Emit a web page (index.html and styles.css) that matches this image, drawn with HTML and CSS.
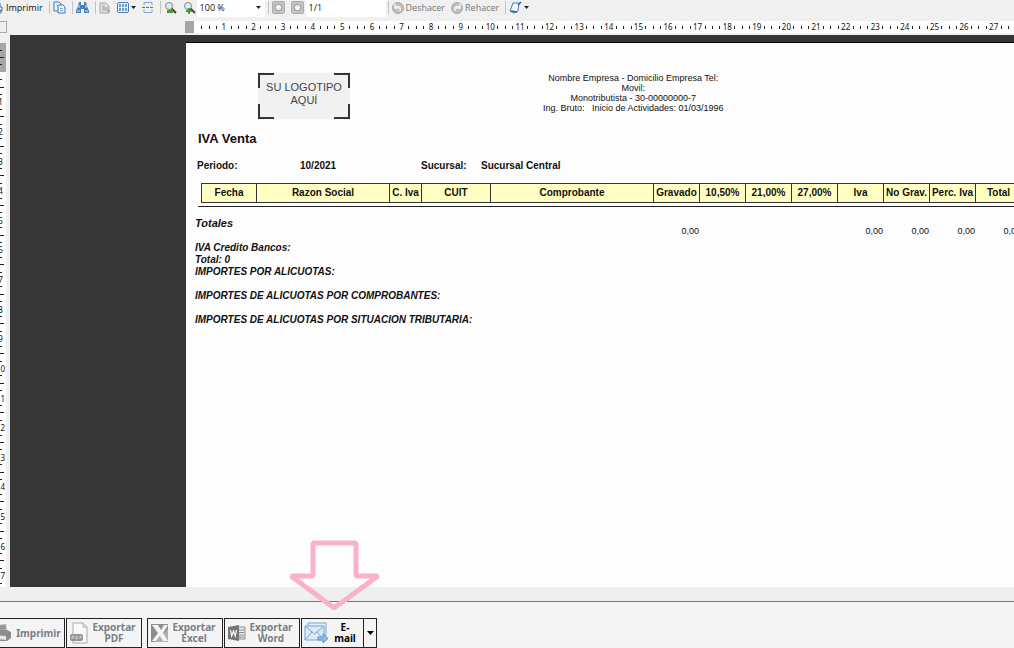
FILE: index.html
```
<!DOCTYPE html>
<html lang="es">
<head>
    <meta charset="UTF-8">
    <meta name="viewport" content="width=device-width, initial-scale=1.0">
    <title>IVA Venta</title>
    <link rel="stylesheet" href="styles.css">
</head>
<body>
    <header class="toolbar">
      <button class="tool print">
        <svg width="12" height="12" viewBox="0 0 12 12"><path d="M2 5V1h6v4M1 5h9v4H1zM3 8h6v3H3z" fill="#fff" stroke="#4d6f9c"/></svg>
        Imprimir
      </button>
      <span class="sep"></span>
      <button class="tool" aria-label="Copiar">
        <svg width="13" height="13" viewBox="0 0 13 13"><path d="M1 1h5l2 2v7H1z" fill="#eef5fc" stroke="#3f78b5"/><path d="M5 4h5l2 2v6H5z" fill="#eef5fc" stroke="#3f78b5"/><path d="M7 7.500h3M7 9.500h3M3 4h1" stroke="#7fa8d4"/></svg>
      </button>
      <span class="sep"></span>
      <button class="tool" aria-label="Buscar">
        <svg width="13" height="13" viewBox="0 0 13 13"><path d="M3 1h2v3h3V1h2l1 4 2 5v2H8V8H5v4H0v-2l2-5z" fill="#4d7fb8"/><path d="M1 10h3M9 10h3M3 4v3M10 4v3" stroke="#d5e4f3"/></svg>
      </button>
      <span class="sep"></span>
      <button class="tool" aria-label="Configurar">
        <svg width="12" height="13" viewBox="0 0 12 13"><path d="M1 2h6l3 3v7H1z" fill="#e2e2e2" stroke="#a5a5a5"/><path d="M3 5h3M3 7h6M3 9h6M8 10h3" stroke="#999"/></svg>
      </button>
      <button class="tool" aria-label="Varias páginas">
        <svg width="12" height="13" viewBox="0 0 12 13"><rect x=".5" y="1.500" width="11" height="10" rx="1.500" fill="#e8f1fa" stroke="#4a7fb8"/><path d="M2 3h2v3H2zM5 3h2v3H5zM8 3h2v3H8zM2 7h2v3H2zM5 7h2v3H5zM8 7h2v3H8z" fill="#6d9bcb"/></svg>
        <svg width="5" height="3" viewBox="0 0 5 3"><path d="M0 0h5L2.500 3z" fill="#222"/></svg>
      </button>
      <button class="tool" aria-label="Ancho de página">
        <svg width="12" height="13" viewBox="0 0 12 13"><path d="M2 4.500v-3h8v3M2 8.500v3h8v-3" fill="none" stroke="#7fa6d0"/><path d="M0 6.500h12" stroke="#3f78b5" stroke-dasharray="3 1"/></svg>
      </button>
      <span class="sep"></span>
      <button class="tool" aria-label="Alejar">
        <svg width="13" height="13" viewBox="0 0 13 13"><path d="M7 7l5 5" stroke="#444" stroke-width="2"/><circle cx="5" cy="5" r="3.500" fill="#dcebf5" stroke="#888"/><path d="M3 9h6v3H3z" fill="#4c9a2a"/></svg>
      </button>
      <button class="tool" aria-label="Acercar">
        <svg width="13" height="13" viewBox="0 0 13 13"><path d="M7 7l5 5" stroke="#444" stroke-width="2"/><circle cx="5" cy="5" r="3.500" fill="#dcebf5" stroke="#888"/><path d="M5 7h2v2h2v2H7v2H5v-2H3V9h2z" fill="#4c9a2a"/></svg>
      </button>
      <span class="zoom">
        <select aria-label="Zoom"><option>100 %</option></select>
        <svg width="5" height="3" viewBox="0 0 5 3"><path d="M0 0h5L2.500 3z" fill="#222"/></svg>
      </span>
      <span class="sep"></span>
      <button class="tool" aria-label="Página anterior">
        <svg width="13" height="13" viewBox="0 0 13 13"><rect x=".5" y=".5" width="12" height="12" rx="1" fill="#c4c4c4" stroke="#aaa"/><circle cx="6.500" cy="6.500" r="3.500" fill="#e4e4e4" stroke="#999"/><path d="M4 7l2.500-3L9 7z" fill="#fff"/></svg>
      </button>
      <button class="tool" aria-label="Página siguiente">
        <svg width="13" height="13" viewBox="0 0 13 13"><rect x=".5" y=".5" width="12" height="12" rx="1" fill="#c4c4c4" stroke="#aaa"/><circle cx="6.500" cy="6.500" r="3.500" fill="#e4e4e4" stroke="#999"/><path d="M4 6l2.500 3L9 6z" fill="#fff"/></svg>
      </button>
      <input class="page-number" type="text" value="1/1" aria-label="Página">
      <span class="sep"></span>
      <button class="tool" disabled>
        <svg width="12" height="12" viewBox="0 0 12 12"><circle cx="6" cy="6" r="5.500" fill="#bdbdbd" stroke="#aaa"/><path d="M3 2v4h4M3 6c3-3 6-1 5 3" fill="none" stroke="#f2f2f2" stroke-width="1.500"/></svg>
        Deshacer
      </button>
      <button class="tool" disabled>
        <svg width="12" height="12" viewBox="0 0 12 12"><circle cx="6" cy="6" r="5.500" fill="#bdbdbd" stroke="#aaa"/><path d="M9 2v4H5M9 6C6 3 3 5 4 9" fill="none" stroke="#f2f2f2" stroke-width="1.500"/></svg>
        Rehacer
      </button>
      <span class="sep"></span>
      <button class="tool" aria-label="Borrar">
        <svg width="13" height="13" viewBox="0 0 13 13"><path d="M4 2h6l-1 8-4 2-4-2z" fill="#f4f9fe" stroke="#3f78b5"/><path d="M9 4l3-3M2 10l6 1" stroke="#2f62a0" stroke-width="1.500"/></svg>
        <svg width="5" height="3" viewBox="0 0 5 3"><path d="M0 0h5L2.500 3z" fill="#222"/></svg>
      </button>
    </header>

    <div class="ruler-row">
      <div class="ruler-corner"></div>
      <div class="ruler-margin"></div>
      <div class="ruler" id="rulerTop"></div>
    </div>

    <main class="workspace">
      <div class="ruler-side">
        <div class="side-margin"><i></i><i class="mid"></i><i></i></div>
        <div class="side-scale" id="rulerSide"></div>
      </div>
      <div class="canvas">
        <article class="report">
          <div class="report-head">
            <div class="logo"><span>SU LOGOTIPO<br>AQUÍ</span></div>
            <p class="company">
              Nombre Empresa - Domicilio Empresa Tel:<br>
              Movil:<br>
              Monotributista - 30-00000000-7<br>
              Ing. Bruto:&nbsp;&nbsp; Inicio de Actividades: 01/03/1996
            </p>
          </div>
          <h1>IVA Venta</h1>
          <div class="filters">
            <b>Periodo:</b>
            <b>10/2021</b>
            <b>Sucursal:</b>
            <b>Sucursal Central</b>
          </div>
          <table class="columns">
            <colgroup>
              <col class="w-date"><col class="w-name"><col class="w-cat"><col class="w-cuit"><col class="w-doc">
              <col class="w-num"><col class="w-num"><col class="w-num"><col class="w-num"><col class="w-num"><col class="w-num"><col class="w-num"><col class="w-num">
            </colgroup>
            <thead>
              <tr>
                <th>Fecha</th>
                <th>Razon Social</th>
                <th>C. Iva</th>
                <th>CUIT</th>
                <th>Comprobante</th>
                <th>Gravado</th>
                <th>10,50%</th>
                <th>21,00%</th>
                <th>27,00%</th>
                <th>Iva</th>
                <th>No Grav.</th>
                <th>Perc. Iva</th>
                <th>Total</th>
              </tr>
            </thead>
          </table>
          <hr>
          <table class="totals">
            <colgroup>
              <col class="w-label"><col class="w-name"><col class="w-cat"><col class="w-cuit"><col class="w-doc">
              <col class="w-num"><col class="w-num"><col class="w-num"><col class="w-num"><col class="w-num"><col class="w-num"><col class="w-num"><col class="w-num">
            </colgroup>
            <tbody>
              <tr>
                <th scope="row">Totales</th>
                <td></td>
                <td></td>
                <td></td>
                <td></td>
                <td>0,00</td>
                <td></td>
                <td></td>
                <td></td>
                <td>0,00</td>
                <td>0,00</td>
                <td>0,00</td>
                <td>0,00</td>
              </tr>
            </tbody>
          </table>
          <div class="summary">
            <p>IVA Credito Bancos:<br>Total: 0<br>IMPORTES POR ALICUOTAS:</p>
            <p>IMPORTES DE ALICUOTAS POR COMPROBANTES:</p>
            <p>IMPORTES DE ALICUOTAS POR SITUACION TRIBUTARIA:</p>
          </div>
        </article>
      </div>
    </main>

    <div class="status"></div>

    <footer class="actions">
      <button class="action action-print">
        <svg width="18" height="20" viewBox="0 0 18 20"><path d="M6 9V2l7-1 1 8z" fill="#a8a8a8"/><path d="M1 9l4-2h9l4 2v6l-4 3H4l-3-2z" fill="#8c8c8c"/><path d="M3 12l10 1v4l-9-1z" fill="#e6e6e6"/><path d="M7 4l5-1M7 6l5-1" stroke="#888"/></svg>
        <span>Imprimir</span>
      </button>
      <button class="action">
        <svg width="20" height="22" viewBox="0 0 20 22"><path d="M3 1h10l4 4v16H3z" fill="#f8f8f8" stroke="#aaa"/><path d="M13 1v4h4" fill="none" stroke="#aaa"/><rect x="0" y="12" width="13" height="7" rx="2" fill="#929292"/><path d="M2 14v3M2 14h2v2H2M6 14v3h1l1-1v-1l-1-1zM10 17v-3h2M10 15.500h2" fill="none" stroke="#ddd" stroke-width=".7"/></svg>
        <span>Exportar PDF</span>
      </button>
      <button class="action spaced">
        <svg width="18" height="18" viewBox="0 0 18 18"><path d="M0 0h17v18H0z" fill="#b0b0b0"/><path d="M0 0h17v5L4 18H0z" fill="#8e8e8e"/><path d="M1 1h6l3 5 3-5h4l-5 8 5 8h-5l-3-5-4 5H1l6-8z" fill="#f4f4f4"/></svg>
        <span>Exportar Excel</span>
      </button>
      <button class="action">
        <svg width="18" height="18" viewBox="0 0 18 18"><path d="M10 3h7v12h-7" fill="#eee" stroke="#888"/><path d="M11 6h5M11 8.500h5M11 11h5M11 13h5" stroke="#888"/><path d="M0 3l11-2v16L0 15z" fill="#757575"/><path d="M2.500 6l1.200 6L5.500 7l1.800 5 1.200-6" fill="none" stroke="#fff" stroke-width="1.200"/></svg>
        <span>Exportar Word</span>
      </button>
      <div class="email">
        <button class="action action-email">
          <svg width="25" height="22" viewBox="0 0 25 22"><path d="M4 5V1h18v13" fill="#e4f0fb" stroke="#76a3d3"/><path d="M1 4h19v14H1z" fill="#d9eafa" stroke="#76a3d3"/><path d="M1 4l9.500 8L20 4M1 18l7-8M20 18l-7-8" fill="none" stroke="#76a3d3"/><path d="M14 15h5v-3l5 4.500-5 4.500v-3h-5z" fill="#8fbce8" stroke="#5f92c8"/></svg>
          <span>E-mail</span>
        </button>
        <button class="action-more" aria-label="Más opciones">
          <svg width="7" height="4" viewBox="0 0 7 4"><path d="M0 0h7L3.500 4z" fill="#000"/></svg>
        </button>
        <svg class="arrow" width="94" height="72" viewBox="0 0 94 72"><path d="M25 3h43v33h22L46 68 3 36h22z" fill="none" stroke="#fbb0cb" stroke-width="5" stroke-linejoin="bevel"/></svg>
      </div>
    </footer>

    <script>
      // Cada unidad de la regla: tres marcas y el número
      function drawRuler(id, units) {
        const ruler = document.getElementById(id);
        for (let n = 1; n <= units; n++) {
          for (let tick = 1; tick <= 3; tick++) {
            const mark = document.createElement('i');
            if (tick === 2) {
              mark.className = 'mid';
            }
            ruler.appendChild(mark);
          }
          const label = document.createElement('span');
          label.textContent = n;
          ruler.appendChild(label);
        }
      }
      drawRuler('rulerTop', 28);
      drawRuler('rulerSide', 18);
    </script>
</body>
</html>
```

FILE: styles.css
```
* {
  box-sizing: border-box;
}
body {
  margin: 0;
  height: 100vh;
  display: flex;
  flex-direction: column;
  overflow: hidden;
  background: #f0f0f0;
  color: #111;
  font-family: "Liberation Sans", Arial, sans-serif;
}
button {
  margin: 0;
  padding: 0;
  border: 0;
  background: none;
  color: inherit;
  font: inherit;
}
svg {
  flex: none;
}

/* toolbar */
.toolbar {
  display: flex;
  align-items: center;
  gap: 6px;
  height: 15px;
  margin-bottom: 6px;
  font-family: "Open Sans", "Noto Sans", sans-serif;
  font-size: 9px;
}
.tool {
  display: flex;
  flex: none;
  align-items: center;
  gap: 2px;
}
.tool:disabled {
  color: #777;
}
.print {
  margin-left: -8px;
}
.sep {
  flex: none;
  width: 1px;
  height: 13px;
  margin-right: -3px;
  background: #c4c4c4;
}
.zoom {
  position: relative;
  flex: none;
  margin: 0 -3px 0 -5px;
}
.zoom svg {
  position: absolute;
  right: 4px;
  top: 8px;
  pointer-events: none;
}
.zoom select,
.page-number {
  display: block;
  height: 19px;
  padding: 0 3px;
  border: 0;
  background: #fff;
  color: #111;
  font: inherit;
}
.zoom select {
  width: 68px;
  appearance: none;
}
.page-number {
  flex: none;
  width: 80px;
  margin: 0 -4px;
}

/* rulers */
.ruler-row {
  display: flex;
  flex: none;
  height: 12px;
  margin-bottom: 2px;
  font-family: "Noto Sans", sans-serif;
  font-size: 8px;
  line-height: 12px;
}
.ruler-corner {
  width: 7px;
  height: 12px;
  margin-right: 178px;
  flex: none;
  border: solid #aaa;
  border-width: 1px 1px 1px 0;
}
.ruler-margin {
  flex: none;
  width: 9px;
  background: #a6a6a6;
}
.ruler {
  display: grid;
  flex: none;
  grid-template-columns: repeat(112, 1fr);
  width: 833px;
  padding-left: 4px;
  background: #fff;
}
.ruler i,
.ruler span {
  display: flex;
  align-items: center;
  justify-content: center;
  min-width: 0;
}
.ruler i::before {
  content: "";
  width: 1px;
  height: 3px;
  background: #222;
}
.workspace {
  display: flex;
  flex: 1;
  min-height: 0;
}
.ruler-side {
  flex: none;
  width: 13px;
  margin: 8px 4px 0 -7px;
  overflow: hidden;
  background: #fff;
  font-family: "Noto Sans", sans-serif;
  font-size: 8px;
}
.side-margin,
.side-scale {
  display: grid;
  grid-auto-rows: 1fr;
}
.side-margin {
  height: 29px;
  padding: 4px 0;
  background: #a6a6a6;
}
.side-scale {
  height: 533px;
  margin-top: 4px;
}
.ruler-side i,
.ruler-side span {
  display: flex;
  align-items: center;
  justify-content: center;
  min-height: 0;
}
.ruler-side span {
  padding-left: 2px;
}
.ruler-side i::before {
  content: "";
  width: 5px;
  height: 1px;
  background: #222;
}
.ruler-side .mid::before {
  width: 8px;
}

/* report */
.canvas {
  flex: 1;
  min-width: 0;
  padding: 7px 0 0 176px;
  overflow: hidden;
  background: #363636;
}
.report {
  height: 100%;
  padding: 30px 0 0 9px;
  border-top: 1px solid #000;
  overflow: hidden;
  background: #fdfdfd;
}
.report-head {
  display: flex;
  align-items: flex-start;
  height: 46px;
}
.logo {
  display: flex;
  justify-content: center;
  width: 92px;
  height: 46px;
  margin: 0 193px 0 63px;
  padding-top: 8px;
  background:
    linear-gradient(#333, #333) 0 0 / 16px 2px,
    linear-gradient(#333, #333) 0 0 / 2px 15px,
    linear-gradient(#333, #333) 100% 0 / 16px 2px,
    linear-gradient(#333, #333) 100% 0 / 2px 15px,
    linear-gradient(#333, #333) 0 100% / 16px 2px,
    linear-gradient(#333, #333) 0 100% / 2px 15px,
    linear-gradient(#333, #333) 100% 100% / 16px 2px,
    linear-gradient(#333, #333) 100% 100% / 2px 15px,
    #f1f1f1;
  background-repeat: no-repeat;
  color: #444;
  font-size: 11px;
  line-height: 13px;
  text-align: center;
}
.company {
  margin: 0;
  font-size: 9px;
  line-height: 10px;
  text-align: center;
  white-space: nowrap;
}
h1 {
  margin: 12px 0 13px 3px;
  font-size: 13px;
  line-height: 16px;
}
.filters {
  display: grid;
  grid-template-columns: 103px 121px 60px 1fr;
  margin-left: 2px;
  font-size: 10px;
  line-height: 12px;
}
.columns,
.totals {
  border-collapse: collapse;
  table-layout: fixed;
  font-size: 10px;
  line-height: 12px;
}
.columns {
  width: 820px;
  margin: 11px 0 3px 6px;
}
.columns th {
  height: 19px;
  padding: 0;
  border: 1px solid #333;
  background: #ffffc4;
  text-align: center;
  white-space: nowrap;
}
.w-date { width: 55px; }
.w-label { width: 61px; }
.w-name { width: 133px; }
.w-cat { width: 32px; }
.w-cuit { width: 69px; }
.w-doc { width: 163px; }
.w-num { width: 46px; }
hr {
  height: 1px;
  margin: 0 0 0 3px;
  border: 0;
  background: #222;
}
.totals {
  width: 826px;
}
.totals th {
  padding: 10px 0 0;
  font-size: 11px;
  font-style: italic;
  text-align: left;
  vertical-align: top;
}
.totals td {
  padding: 18px 0 0;
  font-family: "Liberation Sans Narrow", "Liberation Sans", sans-serif;
  font-size: 9px;
  text-align: right;
}
.summary {
  margin-top: 5px;
  font-size: 10px;
  font-style: italic;
  font-weight: bold;
  line-height: 12px;
}
.summary p {
  margin: 0 0 12px;
}

/* bottom bar */
.status {
  flex: none;
  height: 15px;
  border-bottom: 1px solid #777;
  background: #efefef;
}
.actions {
  display: flex;
  flex: none;
  gap: 1px;
  padding: 16px 0 0;
  height: 46px;
  background: #f4f4f4;
  color: #7a7f85;
  font-family: "Noto Sans", sans-serif;
  font-size: 10px;
  font-weight: bold;
  line-height: 11px;
}
.action,
.action-more {
  display: flex;
  align-items: center;
  height: 30px;
  border: 1px solid #222;
}
.action {
  width: 76px;
  padding: 0 3px;
}
.action span {
  flex: 1;
  text-align: center;
}
.action-print {
  margin-left: -11px;
}
.action-print span {
  padding-left: 5px;
}
.spaced {
  margin-left: 4px;
}
.email {
  position: relative;
  display: flex;
  color: #000;
}
.action-email {
  width: 63px;
  padding: 0 7px 0 2px;
}
.action-email span {
  padding: 0 0 0 5px;
}
.action-more {
  justify-content: center;
  width: 14px;
  margin-left: -1px;
}
.arrow {
  position: absolute;
  left: -13px;
  bottom: 36px;
  pointer-events: none;
}
```
